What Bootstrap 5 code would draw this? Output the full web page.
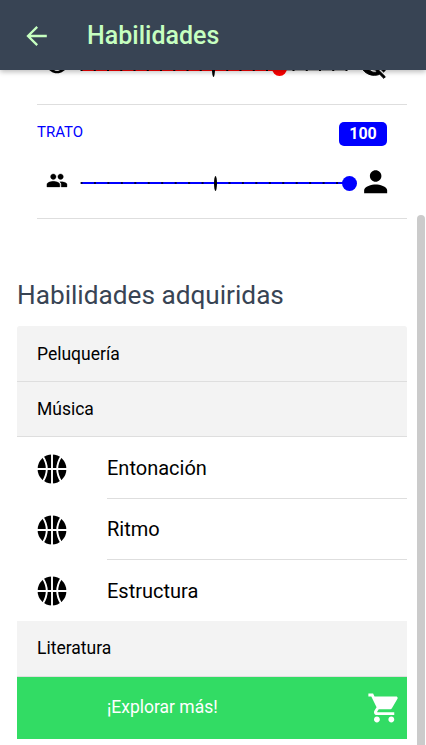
<!DOCTYPE html>
<html lang="es">
<head>
<meta charset="utf-8">
<meta name="viewport" content="width=device-width, initial-scale=1">
<title>Habilidades</title>
<link href="https://cdn.jsdelivr.net/npm/bootstrap@5.3.0/dist/css/bootstrap.min.css" rel="stylesheet">
<style>
body{font-family:Roboto,"Liberation Sans",sans-serif;color:#000;height:745px;background:#fff}
svg{display:block;flex:none}
.app-bar{height:70px;background:#384454;color:#c6ffc0;padding-left:26px;padding-top:2px;box-shadow:0 2px 5px rgba(0,0,0,.26);z-index:5}
.app-bar h1{font-size:25px;font-weight:500;line-height:30px;margin:0 0 0 40px}
.skills{padding:0 19px 0 17px;min-height:0}
.meter{margin-left:20px;height:114px;border-bottom:1px solid #dedede;padding-right:20px}
.meter-first{margin-top:-79px}
.meter-head{height:57px;padding-top:17px}
.meter-name{font-size:15px;line-height:20px;color:#00f}
.score{background:#00f;font-size:16px;font-weight:700;line-height:24px;width:48px;height:24px;border-radius:5px;padding:0}
.meter-track{height:42px}
.section-title{font-size:26.2px;font-weight:400;line-height:32px;color:#384454;margin:60px 0 15px}
.skill-list{border-radius:2px 2px 0 0;overflow:hidden}
.group-row{height:55px;background:#f3f3f3;border:0;border-bottom:1px solid #dedede;border-radius:0;padding:1px 20px 0;font-size:17.5px;color:#000}
.group-first{height:56px}
.group-lit{height:56px;padding:0 20px 1px}
.skill-row{height:61px;padding:0 0 0 20px;font-size:20px;border:0;color:#000}
.skill-label{margin-left:40px;border-bottom:1px solid #dedede}
.skill-first{height:62px}
.skill-first svg{margin-top:2px}
.skill-last .skill-label{border-color:transparent;padding-top:2px}
.more-row{height:62px;background:#32dc64;color:#fff;border:0;border-bottom:1px solid #dedede;border-radius:0;padding:0 6px 0 90px;font-size:17.5px}
.more-row span{padding-bottom:1px}
.scroll-thumb{position:absolute;left:417px;top:215px;width:8px;height:540px;border-radius:4px;background:#cbcbcb}
</style>
<script src="https://cdn.jsdelivr.net/npm/bootstrap@5.3.0/dist/js/bootstrap.bundle.min.js"></script>
</head>
<body class="d-flex flex-column overflow-hidden position-relative">
<svg width="0" height="0" class="position-absolute" aria-hidden="true">
<symbol id="ball" viewBox="0 0 30 30">
<circle cx="15" cy="15" r="14.4"/>
<path d="M15 0V30M0 15H30M5.600 2Q14 15 5.600 28M24.400 2Q16 15 24.400 28" fill="none" stroke="#fff" stroke-width="1.900"/>
</symbol>
</svg>
<header class="app-bar d-flex align-items-center flex-shrink-0 position-relative">
<svg width="21" height="20" viewBox="0 0 21 20" fill="none" stroke="currentColor" stroke-width="2.300"><path d="M20.800 10H2M11.200 .9L2 10l9.200 9.100"/></svg>
<h1>Habilidades</h1>
</header>
<main class="skills d-flex flex-column flex-fill">
<section class="meter meter-first flex-shrink-0">
<div class="meter-head"></div>
<div class="meter-track">
<svg width="370" height="42" viewBox="0 0 370 42">
<svg x="8.600" y="7" width="22.900" height="22.900" viewBox="0 0 512 512"><path d="M256 105c-101.800 0-188.400 62.400-224 151 35.600 88.600 122.200 151 224 151s188.400-62.400 224-151c-35.600-88.600-122.200-151-224-151zm0 251.700c-56 0-101.800-45.300-101.800-100.700S200 155.300 256 155.300 357.800 200.600 357.800 256 312 356.700 256 356.700zm0-161.100c-33.600 0-61.100 27.200-61.100 60.400s27.500 60.400 61.100 60.400 61.100-27.200 61.100-60.400-27.500-60.400-61.100-60.400z"/></svg>
<path d="M243 22.500H310" stroke="#aaa" stroke-width="1"/>
<path d="M44 22H243" stroke="#f00" stroke-width="2"/>
<path d="M43.500 22H311" stroke="#000" stroke-width="2" stroke-dasharray="2 11.250"/>
<ellipse cx="176.500" cy="21.500" rx="1.500" ry="7.500"/>
<circle cx="242.500" cy="20.500" r="7.500" fill="#f00"/>
<svg x="322" y="3.500" width="30.700" height="30.700" viewBox="0 0 512 512" stroke="#000" stroke-width="16"><path d="M256.100 144.800c56.200 0 101.900 45.300 101.900 101.100 0 13.100-2.600 25.500-7.300 37l59.500 59c30.800-25.500 55-58.400 69.900-96-35.300-88.700-122.300-151.600-224.200-151.600-28.500 0-55.800 5.100-81.100 14.100l44 43.700c11.600-4.600 24.100-7.300 37.300-7.300zM52.400 89.700l46.500 46.100 9.400 9.300c-33.900 26-60.400 60.800-76.300 100.800 35.200 88.700 122.200 151.600 224.100 151.600 31.600 0 61.700-6.100 89.200-17l8.600 8.500 59.700 59 25.900-25.700L78.200 64 52.400 89.700zM165 201.400l31.600 31.300c-1 4.200-1.600 8.700-1.600 13.100 0 33.500 27.300 60.600 61.100 60.600 4.500 0 9-.6 13.200-1.600l31.600 31.300c-13.600 6.700-28.700 10.700-44.800 10.700-56.200 0-101.900-45.300-101.900-101.100 0-15.800 4.100-30.700 10.800-44.300z"/></svg>
</svg>
</div>
</section>
<section class="meter flex-shrink-0">
<div class="meter-head d-flex justify-content-between align-items-start">
<span class="meter-name">TRATO</span>
<span class="badge score">100</span>
</div>
<div class="meter-track">
<svg width="370" height="42" viewBox="0 0 370 42">
<svg x="8.500" y="7" width="22.900" height="22.900" viewBox="0 0 512 512" stroke="#000" stroke-width="8"><path d="M337.454 232c33.599 0 61.092-27.002 61.092-60 0-32.997-27.493-60-61.092-60s-61.090 27.003-61.090 60c0 32.998 27.491 60 61.090 60zm-162.908 0c33.599 0 61.090-27.002 61.090-60 0-32.997-27.491-60-61.090-60s-61.092 27.003-61.092 60c0 32.998 27.493 60 61.092 60zm0 44C126.688 276 32 298.998 32 346v54h288v-54c0-47.002-97.599-70-145.454-70zm162.908 11.003c-6.105 0-10.325 0-17.454.997 23.426 17.002 32 28 32 58v54h128v-54c0-47.002-94.688-58.997-142.546-58.997z"/></svg>
<path d="M44 21H313" stroke="#00f" stroke-width="2"/>
<path d="M43.500 21H311" stroke="#000" stroke-width="2" stroke-dasharray="2 11.450" opacity=".75"/>
<ellipse cx="178.500" cy="21.500" rx="1.500" ry="7.500"/>
<circle cx="312.500" cy="21.500" r="7.500" fill="#00f"/>
<svg x="323.300" y="4.300" width="30.700" height="30.700" viewBox="0 0 512 512"><path d="M256 256c52.805 0 96-43.201 96-96s-43.195-96-96-96-96 43.201-96 96 43.195 96 96 96zm0 48c-63.598 0-192 32.402-192 96v48h384v-48c0-63.598-128.402-96-192-96z"/></svg>
</svg>
</div>
</section>
<h2 class="section-title">Habilidades adquiridas</h2>
<div class="skill-list list-group list-group-flush flex-shrink-0">
<div class="list-group-item group-row group-first d-flex align-items-center">Peluquería</div>
<div class="list-group-item group-row d-flex align-items-center">Música</div>
<div class="list-group-item skill-row skill-first d-flex align-items-center"><svg width="30" height="30"><use href="#ball"/></svg><span class="skill-label d-flex align-items-center h-100 flex-fill">Entonación</span></div>
<div class="list-group-item skill-row d-flex align-items-center"><svg width="30" height="30"><use href="#ball"/></svg><span class="skill-label d-flex align-items-center h-100 flex-fill">Ritmo</span></div>
<div class="list-group-item skill-row skill-last d-flex align-items-center"><svg width="30" height="30"><use href="#ball"/></svg><span class="skill-label d-flex align-items-center h-100 flex-fill">Estructura</span></div>
<div class="list-group-item group-row group-lit d-flex align-items-center">Literatura</div>
<a class="list-group-item more-row d-flex align-items-center justify-content-between" href="#"><span>¡Explorar más!</span>
<svg width="36" height="36" viewBox="0 0 512 512" fill="#fff"><path d="M169.600 377.600c-22.882 0-41.600 18.718-41.600 41.601 0 22.882 18.718 41.600 41.600 41.600s41.601-18.718 41.601-41.600c-.001-22.884-18.720-41.601-41.601-41.601zM48 51.200v41.600h41.600l74.883 151.682-31.308 50.954c-3.118 5.200-5.200 12.482-5.200 19.765 0 27.850 19.025 41.600 44.825 41.600H416v-40H177.893c-3.118 0-5.200-2.082-5.200-5.200 0-1.036 2.207-5.200 2.207-5.200l20.782-32.800h154.954c15.601 0 29.128-8.317 36.400-21.836l74.882-128.800c1.237-2.461 2.082-6.246 2.082-10.401 0-11.446-9.364-19.765-20.800-19.765H135.364L115.600 51.200H48zm326.399 326.400c-22.882 0-41.600 18.718-41.600 41.601 0 22.882 18.718 41.600 41.600 41.600S416 442.082 416 419.200c0-22.883-18.719-41.600-41.601-41.600z"/></svg></a>
</div>
</main>
<div class="scroll-thumb"></div>
</body>
</html>
